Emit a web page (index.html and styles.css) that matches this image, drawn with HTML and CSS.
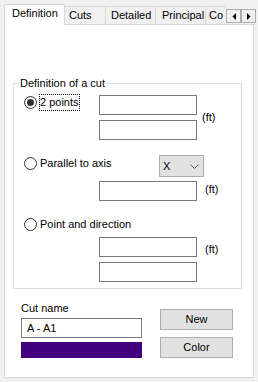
FILE: index.html
```html
<!DOCTYPE html>
<html lang="en">
  <head>
    <meta charset="UTF-8" />
    <title>Cut definition</title>
    <link rel="stylesheet" href="styles.css">
  </head>
  <body>
    <div class="window">
      <div class="tabstrip">
        <div class="tab tab-active">Definition</div>
        <div class="tab tab-cuts">Cuts</div>
        <div class="tab tab-detailed">Detailed</div>
        <div class="tab tab-principal">Principal</div>
        <div class="tab tab-more">Co</div>
        <div class="tab-scroll">
          <span class="scroll-btn">
            <svg width="4" height="7" viewBox="0 0 4 7"><polygon points="4,0 4,7 0.5,3.5" fill="#000"/></svg>
          </span>
          <span class="scroll-btn">
            <svg width="4" height="7" viewBox="0 0 4 7"><polygon points="0,0 0,7 3.5,3.5" fill="#000"/></svg>
          </span>
        </div>
      </div>

      <div class="panel">
        <fieldset class="group">
          <legend>Definition of a cut</legend>

          <div class="option opt-points">
            <div class="radio">
              <span class="circle circle-on"></span>
              <span class="radio-text focused">2 points</span>
            </div>
            <div class="fields">
              <span class="field"></span>
              <span class="field"></span>
            </div>
            <span class="unit">(ft)</span>
          </div>

          <div class="option opt-axis">
            <div class="radio">
              <span class="circle"></span>
              <span class="radio-text">Parallel to axis</span>
            </div>
            <div class="combo">
              <span>X</span>
              <svg width="9" height="5" viewBox="0 0 9 5"><polyline points="0.5,0.5 4.5,4.5 8.5,0.5" fill="none" stroke="#606060" stroke-width="1"/></svg>
            </div>
            <div class="fields">
              <span class="field"></span>
            </div>
            <span class="unit">(ft)</span>
          </div>

          <div class="option opt-dir">
            <div class="radio">
              <span class="circle"></span>
              <span class="radio-text">Point and direction</span>
            </div>
            <div class="fields">
              <span class="field"></span>
              <span class="field"></span>
            </div>
            <span class="unit">(ft)</span>
          </div>
        </fieldset>

        <div class="name-area">
          <div class="name-col">
            <div class="name-label">Cut name</div>
            <div class="field name-field">A - A1</div>
            <div class="swatch"></div>
          </div>
          <div class="btn-col">
            <div class="btn">New</div>
            <div class="btn">Color</div>
          </div>
        </div>
      </div>
    </div>
  </body>
</html>
```

FILE: styles.css
```css
body {
  margin: 0;
  background-color: #f0f0f0;
  font-family: "Liberation Sans", Arial, sans-serif;
  font-size: 11px;
  color: #000;
}
.window {
  padding: 4px 0 0 4px;
}

/* tab strip */
.tabstrip {
  display: flex;
  align-items: flex-end;
  height: 20px;
}
.tab {
  box-sizing: border-box;
  height: 18px;
  padding-top: 2px;
  line-height: 13px;
  border-top: 1px solid #d9d9d9;
  border-right: 1px solid #d9d9d9;
  background-color: #f0f0f0;
  white-space: nowrap;
  overflow: hidden;
}
.tab-active {
  position: relative;
  z-index: 1;
  width: 61px;
  height: 21px;
  margin-bottom: -1px;
  padding-left: 7px;
  border-left: 1px solid #d9d9d9;
  background-color: #fff;
}
.tab-cuts {
  width: 41px;
  padding-left: 4px;
}
.tab-detailed {
  width: 50px;
  padding-left: 5px;
}
.tab-principal {
  width: 50px;
  padding-left: 6px;
}
.tab-more {
  width: 20px;
  padding-left: 3px;
  border-right: none;
}
.tab-scroll {
  display: flex;
  margin-bottom: 1px;
}
.scroll-btn {
  box-sizing: border-box;
  width: 15px;
  height: 14px;
  border: 1px solid #adadad;
  background-color: #f0f0f0;
  display: flex;
  align-items: center;
  justify-content: center;
}

/* page */
.panel {
  box-sizing: border-box;
  width: 250px;
  height: 354px;
  padding: 50px 0 0 8px;
  border: 1px solid #d9d9d9;
  background-color: #fff;
}
.group {
  box-sizing: border-box;
  width: 229px;
  min-width: 0;
  margin: 0;
  padding: 0 0 6px;
  border: 1px solid #dcdcdc;
}
.group legend {
  margin-left: 5px;
  padding: 0 1px;
  line-height: 16px;
}

.option {
  display: grid;
  grid-template-columns: 85px 98px auto;
  align-items: start;
}
.radio {
  display: flex;
  align-items: center;
  height: 13px;
  padding-left: 10px;
}
.circle {
  box-sizing: border-box;
  width: 13px;
  height: 13px;
  border: 1px solid #333;
  border-radius: 50%;
  background-color: #fff;
  display: flex;
  align-items: center;
  justify-content: center;
  flex-shrink: 0;
}
.circle-on::after {
  content: "";
  width: 7px;
  height: 7px;
  border-radius: 50%;
  background-color: #333;
}
.radio-text {
  margin-left: 2px;
  border: 1px solid transparent;
  line-height: 15px;
  white-space: nowrap;
}
.radio-text.focused {
  border: 1px dotted #000;
}
.fields {
  display: flex;
  flex-direction: column;
  gap: 5px;
}
.field {
  box-sizing: border-box;
  display: block;
  width: 98px;
  height: 20px;
  border: 1px solid #7a7a7a;
  background-color: #fff;
}
.unit {
  line-height: 13px;
  margin-left: 8px;
}

.opt-points .radio {
  margin-top: 5px;
}
.opt-points .fields {
  margin-top: 4px;
}
.opt-points .unit {
  align-self: center;
  margin-top: 4px;
  margin-left: 5px;
}

.opt-axis {
  margin-top: 15px;
}
.opt-axis .radio {
  margin-top: 2px;
}
.opt-axis .fields {
  grid-row: 2;
  grid-column: 2;
  margin-top: 4px;
}
.opt-axis .unit {
  grid-row: 2;
  grid-column: 3;
  align-self: center;
}
.combo {
  box-sizing: border-box;
  width: 45px;
  height: 22px;
  margin-left: 60px;
  padding: 0 4px 0 3px;
  border: 1px solid #adadad;
  background-color: #e1e1e1;
  display: flex;
  align-items: center;
  justify-content: space-between;
  line-height: 13px;
}

.opt-dir {
  margin-top: 17px;
}
.opt-dir .fields {
  grid-row: 2;
  grid-column: 2;
  margin-top: 6px;
}
.opt-dir .unit {
  grid-row: 2;
  grid-column: 3;
  margin-top: 12px;
}

/* cut name */
.name-area {
  display: flex;
  margin-top: 13px;
  padding-left: 8px;
}
.name-col {
  width: 121px;
}
.name-label {
  line-height: 13px;
}
.name-field {
  width: 121px;
  margin-top: 3px;
  padding-left: 5px;
  line-height: 18px;
}
.swatch {
  height: 16px;
  margin-top: 4px;
  background-color: #42007f;
}
.btn-col {
  display: flex;
  flex-direction: column;
  gap: 7px;
  margin-top: 7px;
  margin-left: 18px;
}
.btn {
  box-sizing: border-box;
  width: 73px;
  height: 21px;
  border: 1px solid #adadad;
  background-color: #e1e1e1;
  text-align: center;
  line-height: 19px;
}
```
